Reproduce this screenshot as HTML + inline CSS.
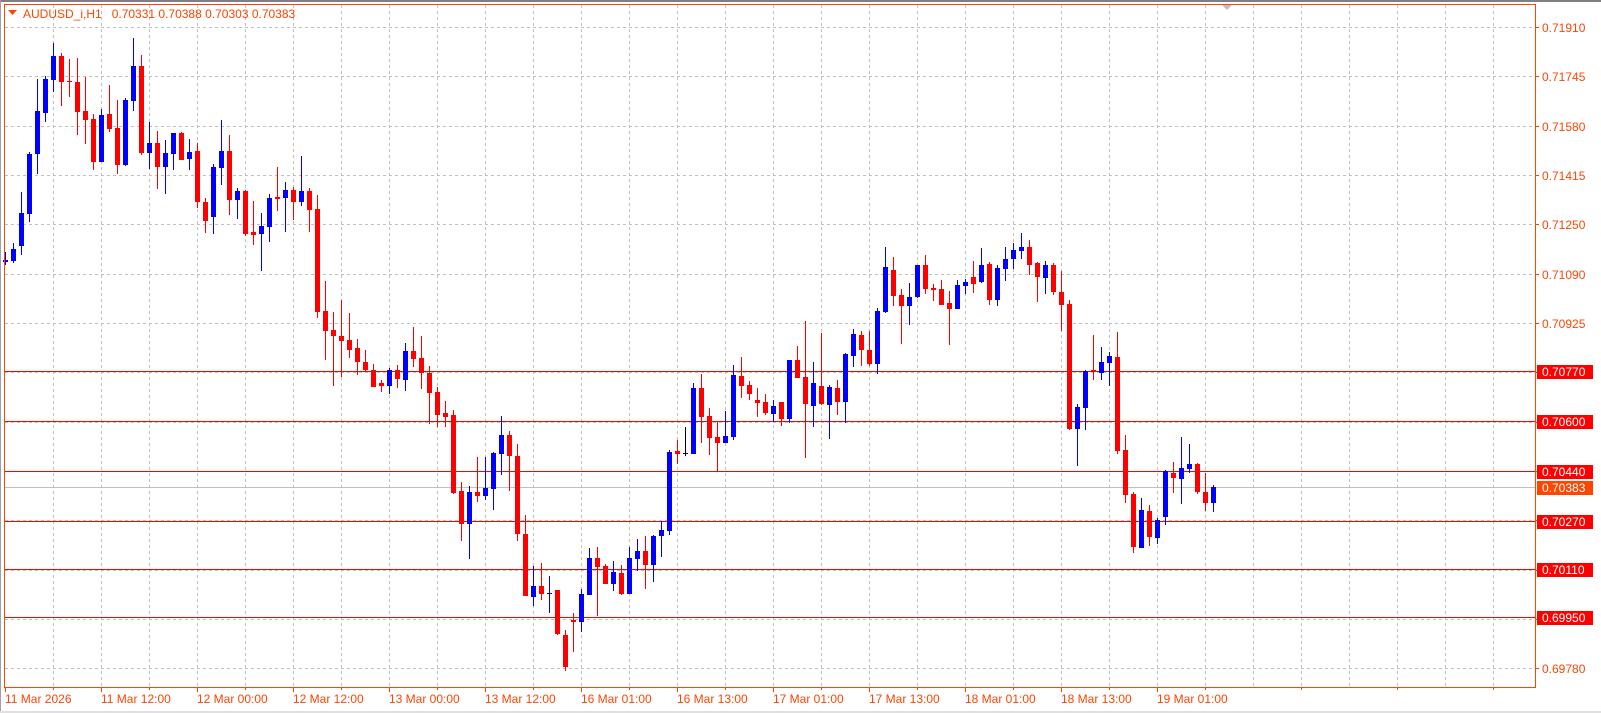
<!DOCTYPE html>
<html><head><meta charset="utf-8">
<style>
html,body{margin:0;padding:0;background:#fff;width:1601px;height:713px;overflow:hidden}
svg{display:block}
text{font-family:"Liberation Sans",sans-serif;font-size:12px}
</style></head>
<body>
<svg id="s" width="1601" height="713" xmlns="http://www.w3.org/2000/svg">
<rect x="0" y="0" width="1601" height="713" fill="#fff"/>
<rect x="0" y="0" width="1601" height="2" fill="#808080"/>
<rect x="0" y="0" width="1" height="713" fill="#a0a0a0"/>
<rect x="0" y="711" width="1601" height="2" fill="#e0e0e0"/>
<g id="grid" stroke="#c0c0c0" stroke-width="1" stroke-dasharray="3,3"></g>
<g id="lines"></g>
<g id="candles"></g>
<rect x="4.5" y="4.5" width="1531" height="683" fill="none" stroke="#ff4500" stroke-width="1"/>
<polygon points="1222,5 1232,5 1227,10" fill="#c0c0c0"/>
<polygon points="8,10 17,10 12.5,15" fill="#ff4500"/>
<text x="23" y="18" fill="#ff4500" style="white-space:pre" xml:space="preserve">AUDUSD_i,H1   0.70331 0.70388 0.70303 0.70383</text>
<g id="axis"></g>
</svg>
<script>
var NS="http://www.w3.org/2000/svg";
function el(p,n,a,t){var e=document.createElementNS(NS,n);for(var k in a)e.setAttribute(k,a[k]);if(t!==undefined)e.textContent=t;p.appendChild(e);return e;}
var grid=document.getElementById('grid'),lines=document.getElementById('lines'),cg=document.getElementById('candles'),ax=document.getElementById('axis');
var gy=[27,76,126,175,224,274,323,372,422,471,520,570,619,668];
var gl=["0.71910","0.71745","0.71580","0.71415","0.71250","0.71090","0.70925",null,"0.70600","0.70440","0.70270","0.70110","0.69950","0.69780"];
gy.forEach(function(y,i){el(grid,'line',{x1:5,x2:1535,y1:y+.5,y2:y+.5});});
for(var x=53;x<1535;x+=48){el(grid,'line',{x1:x+.5,x2:x+.5,y1:5,y2:687});}
gy.forEach(function(y,i){el(ax,'line',{x1:1535,x2:1539,y1:y+.5,y2:y+.5,stroke:'#ff4500'});if(gl[i])el(ax,'text',{x:1542,y:y+5,fill:'#ff4500'},gl[i]);});
var dl=["11 Mar 2026","11 Mar 12:00","12 Mar 00:00","12 Mar 12:00","13 Mar 00:00","13 Mar 12:00","16 Mar 01:00","16 Mar 13:00","17 Mar 01:00","17 Mar 13:00","18 Mar 01:00","18 Mar 13:00","19 Mar 01:00"];
dl.forEach(function(t,i){var x=5+96*i;el(ax,'line',{x1:x+.5,x2:x+.5,y1:687,y2:692,stroke:'#ff4500'});el(ax,'text',{x:x,y:703,fill:'#ff4500'},t);});
for(var x=53;x<1535;x+=96){el(ax,'line',{x1:x+.5,x2:x+.5,y1:687,y2:690,stroke:'#ff4500'});}
el(lines,'line',{x1:5,x2:1535,y1:487.5,y2:487.5,stroke:'#c0c0c0'});
[[371,"0.70770"],[421,"0.70600"],[471,"0.70440"],[521,"0.70270"],[569,"0.70110"],[617,"0.69950"]].forEach(function(a){
 el(lines,'line',{x1:5,x2:1535,y1:a[0]+.5,y2:a[0]+.5,stroke:'#ff0000'});
 el(ax,'rect',{x:1537,y:a[0]-6,width:56,height:14,fill:'#ff0000'});
 el(ax,'text',{x:1542,y:a[0]+5,fill:'#fff'},a[1]);
});
el(ax,'rect',{x:1537,y:481,width:56,height:14,fill:'#ff4500'});
el(ax,'text',{x:1542,y:492,fill:'#fff'},"0.70383");
var D=[
[260,262,252,265,'b'],[249,261,243,263,'b'],[213,246,192,255,'b'],[154,214,152,222,'b'],[111,154,79,174,'b'],[79,113,76,122,'b'],[56,80,43,92,'b'],[56,82,53,106,'r'],[81,81,59,97,'r'],[82,112,58,135,'r'],
[111,120,77,144,'r'],[119,162,114,170,'r'],[115,162,109,162,'b'],[114,129,85,132,'r'],[128,165,100,174,'r'],[100,165,98,166,'b'],[66,101,38,111,'b'],[66,153,55,155,'r'],[143,153,122,169,'b'],[143,167,131,189,'r'],
[153,167,140,194,'b'],[133,154,133,170,'b'],[133,160,132,160,'r'],[152,159,139,170,'b'],[151,202,143,208,'r'],[202,221,198,233,'r'],[167,217,164,234,'b'],[151,168,120,185,'b'],[151,200,135,215,'r'],[191,200,188,219,'b'],
[191,234,190,236,'r'],[232,235,201,245,'r'],[226,234,213,271,'b'],[198,227,194,242,'b'],[197,199,167,211,'r'],[190,198,182,232,'b'],[190,202,187,220,'r'],[191,202,156,206,'b'],[191,210,188,232,'r'],[209,312,195,318,'r'],
[311,331,281,360,'r'],[330,336,312,386,'r'],[336,341,300,377,'r'],[340,350,313,358,'r'],[348,362,339,375,'r'],[362,370,350,371,'r'],[370,387,364,387,'r'],[383,386,380,392,'r'],[370,386,368,394,'b'],[370,379,365,388,'r'],
[351,380,343,391,'b'],[351,359,327,367,'r'],[358,373,336,389,'r'],[373,393,366,424,'r'],[392,415,387,427,'r'],[413,417,401,427,'r'],[415,493,410,494,'r'],[491,524,482,541,'r'],[492,524,486,559,'b'],[492,496,457,502,'r'],
[488,496,457,500,'b'],[453,489,452,510,'b'],[435,454,416,475,'b'],[435,456,431,491,'r'],[456,534,444,541,'r'],[534,596,515,596,'r'],[586,597,566,606,'b'],[586,594,563,600,'r'],[593,593,576,613,'b'],[590,634,590,635,'r'],
[635,667,630,671,'r'],[620,622,613,652,'r'],[594,622,589,632,'b'],[558,595,548,595,'b'],[558,567,547,616,'r'],[566,584,564,584,'r'],[572,584,561,591,'b'],[573,594,565,595,'r'],[558,594,547,594,'b'],[551,559,539,571,'b'],
[551,565,536,589,'r'],[536,565,535,582,'b'],[530,536,521,557,'b'],[452,531,450,535,'b'],[451,454,440,464,'r'],[453,453,427,456,'k'],[388,454,383,454,'b'],[388,417,374,443,'r'],[416,438,408,455,'r'],[437,443,422,471,'r'],
[436,443,411,443,'b'],[375,437,365,440,'b'],[376,386,357,398,'r'],[385,394,381,400,'r'],[400,403,388,417,'r'],[402,413,394,415,'r'],[406,414,400,422,'b'],[402,419,402,426,'r'],[360,419,360,423,'b'],[360,378,346,378,'r'],
[377,404,321,458,'r'],[383,406,362,427,'b'],[386,404,333,405,'r'],[387,405,385,439,'b'],[388,402,380,415,'r'],[354,402,353,423,'b'],[334,356,329,367,'b'],[335,350,331,366,'r'],[350,364,331,366,'r'],[311,364,308,374,'b'],
[267,312,247,313,'b'],[270,296,257,306,'r'],[295,306,289,344,'r'],[297,306,283,325,'b'],[265,297,265,298,'b'],[265,289,255,294,'r'],[288,290,284,301,'r'],[289,305,280,305,'r'],[303,309,291,345,'r'],[285,309,280,309,'b'],
[282,286,279,294,'b'],[277,284,261,293,'r'],[265,282,248,283,'b'],[264,300,262,305,'r'],[268,300,265,306,'b'],[259,269,247,281,'b'],[250,259,243,269,'b'],[247,251,233,259,'b'],[247,265,240,275,'r'],[263,277,262,302,'r'],
[265,278,261,294,'b'],[265,292,263,295,'r'],[292,305,271,331,'r'],[304,429,300,430,'r'],[407,429,404,466,'b'],[371,408,370,430,'b'],[370,372,335,380,'r'],[362,373,347,380,'b'],[356,363,352,386,'b'],[357,451,332,454,'r'],
[450,495,435,503,'r'],[494,547,492,553,'r'],[510,548,498,548,'b'],[511,537,505,546,'r'],[520,538,518,544,'b'],[471,517,470,525,'b'],[473,478,462,493,'r'],[468,479,437,504,'b'],[464,469,444,473,'b'],[464,492,463,494,'r'],
[492,503,473,511,'r'],[487,503,485,512,'b']
];
var col={b:'#0000ff',r:'#ff0000',k:'#000000'};
D.forEach(function(d,k){var x=5+8*k,c=col[d[4]];
 el(cg,'rect',{x:x,y:d[2],width:1,height:Math.max(1,d[3]-d[2]),fill:c});
 el(cg,'rect',{x:x-2,y:d[0],width:5,height:Math.max(1,d[1]-d[0]),fill:c});
});
</script>
</body></html>
